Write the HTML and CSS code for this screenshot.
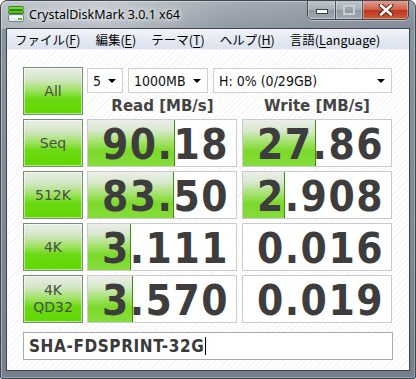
FILE: index.html
```html
<!DOCTYPE html>
<html>
<head>
  <title>CrystalDiskMark 3.0.1 x64</title>
  <link rel="stylesheet" href="styles.css">
</head>
<body>
  <div class="window">
    <div class="titlebar">
      <svg class="app-icon" width="16" height="16" viewBox="0 0 16 16">
        <rect x="0.5" y="0.5" width="15" height="3" rx="1" fill="#6ed832" stroke="#3c8a1e"/>
        <rect x="0.5" y="4.5" width="15" height="3" rx="1" fill="#52c41e" stroke="#2f7a16"/>
        <rect x="0.5" y="8.5" width="15" height="7" rx="1.5" fill="#e8ecef" stroke="#7a848e"/>
        <rect x="2" y="10" width="12" height="2" fill="#ffffff"/>
        <rect x="10" y="12" width="4" height="2" fill="#47c41a"/>
      </svg>
      <span class="title">CrystalDiskMark 3.0.1 x64</span>
      <div class="caption">
        <div class="cap-btn min">
          <svg width="12" height="6" viewBox="0 0 12 6"><rect x="0.5" y="0.5" width="11" height="4" fill="#fff" stroke="#3a424c"/></svg>
        </div>
        <div class="cap-btn max">
          <svg width="12" height="10" viewBox="0 0 12 10"><rect x="1" y="1" width="10" height="8" fill="none" stroke="#c9ced3" stroke-width="2"/><rect x="3" y="3" width="6" height="4" fill="none" stroke="#8d959e"/></svg>
        </div>
        <div class="cap-btn close">
          <svg width="16" height="12" viewBox="0 0 16 12"><path d="M3 1.5 L13 10.5 M13 1.5 L3 10.5" stroke="#5a1e14" stroke-width="4.5" stroke-linecap="round"/><path d="M3 1.5 L13 10.5 M13 1.5 L3 10.5" stroke="#fff" stroke-width="2.6" stroke-linecap="round"/></svg>
        </div>
      </div>
    </div>

    <div class="client">
      <div class="menubar">
        <span>ファイル(<u>F</u>)</span>
        <span>編集(<u>E</u>)</span>
        <span>テーマ(<u>T</u>)</span>
        <span>ヘルプ(<u>H</u>)</span>
        <span>言語(<u>L</u>anguage)</span>
      </div>

      <div class="content">
        <div class="grid">
          <div class="test-btn">All</div>
          <div class="controls">
            <div class="selects">
              <div class="combo count">5<span class="arrow"></span></div>
              <div class="combo size">1000MB<span class="arrow"></span></div>
              <div class="combo drive">H: 0% (0/29GB)<span class="arrow"></span></div>
            </div>
            <div class="heads">
              <span>Read [MB/s]</span>
              <span>Write [MB/s]</span>
            </div>
          </div>

          <div class="test-btn">Seq</div>
          <div class="cell read" style="--fill: 59%">90.18</div>
          <div class="cell" style="--fill: 49%">27.86</div>

          <div class="test-btn">512K</div>
          <div class="cell read" style="--fill: 58%">83.50</div>
          <div class="cell" style="--fill: 28.5%">2.908</div>

          <div class="test-btn">4K</div>
          <div class="cell read" style="--fill: 29%">3.111</div>
          <div class="cell">0.016</div>

          <div class="test-btn two-line">4K<br>QD32</div>
          <div class="cell read" style="--fill: 30.5%">3.570</div>
          <div class="cell">0.019</div>
        </div>

        <div class="comment">SHA-FDSPRINT-32G<span class="caret"></span></div>
      </div>
    </div>
  </div>
</body>
</html>
```

FILE: styles.css
```css
body {
  margin: 0;
  background: #fff;
}

.window {
  width: 416px;
  height: 379px;
  box-sizing: border-box;
  display: flex;
  flex-direction: column;
  border: 1px solid #3e4752;
  border-radius: 7px 7px 2px 2px;
  background:
    linear-gradient(to right, rgba(255,255,255,0.3), rgba(255,255,255,0.4) 25%, rgba(255,255,255,0.05) 55%, rgba(0,0,0,0.06)) top / 100% 28px no-repeat,
    linear-gradient(to bottom, #a0a9b2, #8a949f 28px, #76808c);
  box-shadow: inset 1px 1px 0 rgba(255,255,255,0.35), inset -1px -1px 0 rgba(255,255,255,0.25);
  overflow: hidden;
}

/* title bar */
.titlebar {
  height: 27px;
  display: flex;
  align-items: flex-start;
  padding-left: 7px;
}
.app-icon {
  margin-top: 5px;
  flex: none;
}
.title {
  margin-left: 5px;
  margin-top: 5px;
  font-family: "Noto Sans", "Open Sans", sans-serif;
  font-size: 12.5px;
  line-height: 18px;
  color: #000;
  text-shadow: 0 0 8px #fff, 0 0 4px #fff;
}
.caption {
  margin-left: auto;
  margin-right: 6px;
  margin-top: -1px;
  display: flex;
  height: 19px;
  border: 1px solid #3e4752;
  border-top: none;
  border-radius: 0 0 5px 5px;
  overflow: hidden;
  box-shadow: 0 1px 0 rgba(255,255,255,0.4);
}
.cap-btn {
  display: flex;
  align-items: center;
  justify-content: center;
  height: 19px;
  box-shadow: inset 0 0 0 1px rgba(255,255,255,0.35);
}
.cap-btn.min {
  width: 27px;
  background: linear-gradient(#c3c9cf, #a6aeb7 50%, #8e98a2 51%, #a0a9b2);
  border-right: 1px solid #4a535e;
}
.cap-btn.min svg { margin-top: 5px; }
.cap-btn.max {
  width: 26px;
  background: linear-gradient(#c3c9cf, #a6aeb7 50%, #8e98a2 51%, #a0a9b2);
  border-right: 1px solid #4a535e;
}
.cap-btn.close {
  width: 45px;
  background: linear-gradient(#e3a696, #cf6048 50%, #b8341c 51%, #cf5a3c);
}

/* client area */
.client {
  flex: 1;
  display: flex;
  flex-direction: column;
  margin: 0 5px 7px 5px;
  border: 1px solid #3a434e;
  background: #fff;
}
.menubar {
  height: 20px;
  display: flex;
  gap: 15px;
  padding-left: 8px;
  align-items: center;
  background: linear-gradient(#f2f4f9, #e3e8f1 60%, #dce2ed);
  border-bottom: 1px solid #f4f6fa;
  font-family: "Noto Sans CJK JP", "Noto Sans", sans-serif;
  font-size: 12.5px;
  color: #000;
}
.menubar u { text-underline-offset: 2px; }

.content {
  flex: 1;
  padding: 17px 0 0 16px;
  background: repeating-linear-gradient(-45deg, #fff 0 3px, #f5f5f5 3px 4px);
}

.grid {
  display: grid;
  grid-template-columns: 60px 151px 150px;
  grid-template-rows: repeat(5, 48px);
  column-gap: 4px;
  row-gap: 4px;
}

.test-btn {
  box-sizing: border-box;
  display: flex;
  align-items: center;
  justify-content: center;
  text-align: center;
  border: 1px solid #7b8a78;
  background: linear-gradient(#e9ede6, #d2e6c4 25%, #9ce25e 50%, #6cd914 66%, #5fd800);
  box-shadow: inset 0 0 0 1px rgba(255,255,255,0.5);
  font-family: "DejaVu Sans", sans-serif;
  font-size: 14px;
  color: #4a4e48;
}
.test-btn.two-line {
  line-height: 17px;
}

.controls {
  grid-column: 2 / 4;
  display: flex;
  flex-direction: column;
}
.selects {
  display: flex;
  gap: 5px;
  margin-top: 1px;
}
.combo {
  box-sizing: border-box;
  height: 25px;
  display: flex;
  align-items: center;
  padding-left: 5px;
  padding-right: 6px;
  border: 1px solid #cfcfcf;
  background: #fff;
  font-family: "DejaVu Sans Condensed", "DejaVu Sans", sans-serif;
  font-stretch: condensed;
  font-size: 14px;
  color: #111;
}
.combo.count { width: 36px; }
.combo.size { width: 80px; }
.combo.drive { flex: 1; }
.arrow {
  margin-left: auto;
  width: 0;
  height: 0;
  border-left: 4px solid transparent;
  border-right: 4px solid transparent;
  border-top: 4px solid #000;
}

.heads {
  display: grid;
  grid-template-columns: 151px 150px;
  column-gap: 4px;
  margin-top: 4px;
  text-align: center;
  font-family: "DejaVu Sans", sans-serif;
  font-weight: bold;
  font-size: 15px;
  line-height: 18px;
  color: #444;
}

.cell {
  --fill: 0%;
  width: 150px;
  box-sizing: border-box;
  border: 1px solid #cbcbcb;
  padding: 3px 7px 0 0;
  text-align: right;
  font-family: "DejaVu Sans Condensed", "DejaVu Sans", sans-serif;
  font-stretch: condensed;
  font-weight: bold;
  font-size: 42px;
  line-height: 43px;
  letter-spacing: 1.5px;
  color: #3d3d3d;
  background:
    linear-gradient(to right, transparent calc(var(--fill) - 1px), #3c8c1c calc(var(--fill) - 1px), #3c8c1c var(--fill), transparent var(--fill)),
    linear-gradient(#eceeea, #d9e8cf 22%, #a4e26c 48%, #7cd92a 68%, #86dc3c) left top / var(--fill) 100% no-repeat,
    #fff;
}

.comment {
  box-sizing: border-box;
  width: 370px;
  height: 28px;
  margin-top: 9px;
  display: flex;
  align-items: center;
  padding-left: 5px;
  border: 1px solid #ababab;
  background: #fff;
  font-family: "DejaVu Sans Condensed", "DejaVu Sans", sans-serif;
  font-stretch: condensed;
  font-weight: bold;
  font-size: 17px;
  letter-spacing: 0.6px;
  color: #3a3a3a;
}
.caret {
  width: 1px;
  height: 18px;
  background: #000;
  margin-left: 1px;
}
```
